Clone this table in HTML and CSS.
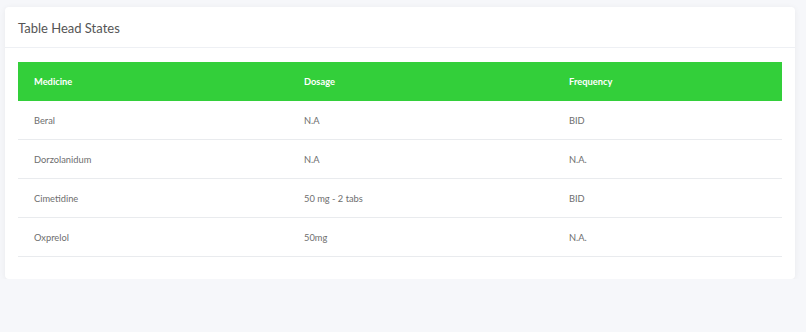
FILE: index.html
```html
<!DOCTYPE html>
<html>
<head>
<meta charset="utf-8">
<link rel="stylesheet" href="styles.css">
</head>
<body>
<div class="card">
  <div class="card-header"><h4 class="card-title">Table Head States</h4></div>
  <div class="card-body">
    <table class="table">
      <thead>
        <tr><th class="c1">Medicine</th><th class="c2">Dosage</th><th>Frequency</th></tr>
      </thead>
      <tbody>
        <tr><td>Beral</td><td>N.A</td><td>BID</td></tr>
        <tr><td>Dorzolanidum</td><td>N.A</td><td>N.A.</td></tr>
        <tr><td>Cimetidine</td><td>50 mg - 2 tabs</td><td>BID</td></tr>
        <tr><td>Oxprelol</td><td>50mg</td><td>N.A.</td></tr>
      </tbody>
    </table>
  </div>
</div>
</body>
</html>
```
FILE: styles.css
```css
html, body {
  margin: 0;
  padding: 0;
  background: #f6f7fa;
  font-family: Lato, "Open Sans", sans-serif;
}
body {
  padding: 7px 11px 0 5px;
}
.card {
  background: #fff;
  border-radius: 4px;
  box-shadow: 0 1px 6px rgba(0, 0, 0, 0.06);
  width: 790px;
}
.card-header {
  height: 41px;
  border-bottom: 1px solid #eef0f4;
  display: flex;
  align-items: center;
  padding: 1px 13px 0;
  box-sizing: border-box;
}
.card-title {
  margin: 0;
  font-size: 13px;
  font-weight: 400;
  color: #555;
}
.card-body {
  padding: 14px 13px 22px;
}
.table {
  width: 100%;
  border-collapse: collapse;
  table-layout: fixed;
  font-size: 9.3px;
  color: #6e6e6e;
}
.table th {
  background: #33cf3a;
  color: #fff;
  font-weight: 700;
  text-align: left;
  height: 39px;
  padding: 0 16px;
}
.table th.c1 { width: 238px; }
.table th.c2 { width: 233px; }
.table td {
  height: 38px;
  padding: 0 16px;
  border-bottom: 1px solid #e9ebee;
}
```
